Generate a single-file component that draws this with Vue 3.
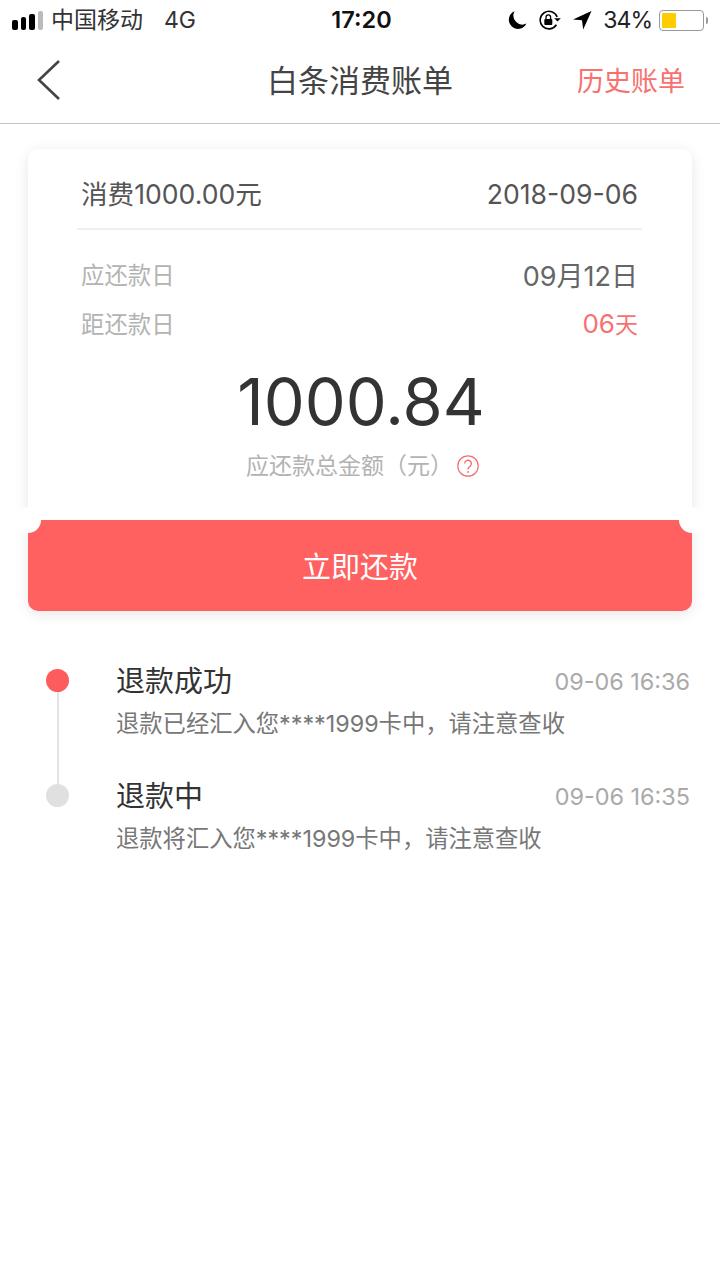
<template>
  <div class="page">
    <div class="status-bar">
      <div class="status-left">
        <div class="signal">
          <i class="s1"></i><i class="s2"></i><i class="s3"></i><i class="s4"></i>
        </div>
        <span class="carrier">中国移动</span>
        <span class="network">4G</span>
      </div>
      <div class="status-time">17:20</div>
      <div class="status-right">
        <svg class="ic-moon" width="20" height="20" viewBox="0 0 20 20">
          <path d="M7.6 1.2A9.2 9.2 0 1 0 19.4 13.6 9 9 0 0 1 7.6 1.2z" fill="#000" />
        </svg>
        <svg class="ic-lock" width="24" height="20" viewBox="0 0 24 20">
          <path d="M19.2 7A8.8 8.8 0 1 0 18.4 14.8" fill="none" stroke="#000" stroke-width="1.6" />
          <path d="M16.2 8.2h6.6l-3.3 3.4z" fill="#000" />
          <rect x="6.3" y="9" width="8" height="6" rx="1" fill="#000" />
          <path d="M8 9V7.2a2.3 2.3 0 0 1 4.6 0V9" fill="none" stroke="#000" stroke-width="1.3" />
        </svg>
        <svg class="ic-loc" width="20" height="20" viewBox="0 0 20 20">
          <path d="M19.5 1L1 9.4l9 .9L11.2 19.5z" fill="#000" />
        </svg>
        <span class="battery-text">34%</span>
        <div class="battery">
          <div class="battery-body"><div class="battery-level"></div></div>
          <div class="battery-tip"></div>
        </div>
      </div>
    </div>

    <div class="nav">
      <svg class="back" width="26" height="42" viewBox="0 0 26 42">
        <path d="M23 2L3 21l20 19" fill="none" stroke="#444" stroke-width="2.6" />
      </svg>
      <h1 class="nav-title">白条消费账单</h1>
      <span class="nav-link">历史账单</span>
    </div>

    <div class="card-wrap">
      <div class="card">
        <div class="card-head">
          <span>消费1000.00元</span>
          <span>2018-09-06</span>
        </div>
        <div class="rows">
          <div class="row">
            <span class="row-label">应还款日</span>
            <span class="row-value">09月12日</span>
          </div>
          <div class="row">
            <span class="row-label">距还款日</span>
            <span class="row-value red"><b>06</b>天</span>
          </div>
        </div>
        <div class="amount">1000.84</div>
        <div class="amount-label">
          <span>应还款总金额（元）</span>
          <svg width="22" height="22" viewBox="0 0 22 22" class="help">
            <circle cx="11" cy="11" r="10.2" fill="none" stroke="#f26d6d" stroke-width="1.2" />
            <path d="M7.6 8.6a3.4 3.4 0 1 1 5.4 2.8c-1.2.9-2 1.4-2 3" fill="none" stroke="#f26d6d" stroke-width="1.3" />
            <circle cx="11" cy="17" r="0.9" fill="#f26d6d" />
          </svg>
        </div>
      </div>
      <button type="button" class="pay-btn">立即还款</button>
      <i class="notch left"></i>
      <i class="notch right"></i>
    </div>

    <div class="timeline">
      <div v-for="(item, index) in steps" :key="index" class="step">
        <div class="step-mark">
          <i class="dot" :class="{ active: item.active }"></i>
          <i v-if="index < steps.length - 1" class="line"></i>
        </div>
        <div class="step-body">
          <div class="step-top">
            <span class="step-title">{{ item.title }}</span>
            <span class="step-time">{{ item.time }}</span>
          </div>
          <div class="step-desc">{{ item.desc }}</div>
        </div>
      </div>
    </div>
  </div>
</template>

<script setup>
const steps = [
  {
    title: "退款成功",
    time: "09-06 16:36",
    desc: "退款已经汇入您****1999卡中，请注意查收",
    active: true,
  },
  {
    title: "退款中",
    time: "09-06 16:35",
    desc: "退款将汇入您****1999卡中，请注意查收",
    active: false,
  },
];
</script>

<style>
html,
body {
  background: #fff;
}
</style>

<style scoped>
.page {
  width: 720px;
  height: 1280px;
  overflow: hidden;
  background: #fff;
  font-family: Inter, "Noto Sans CJK SC", sans-serif;
  color: #333;
}

.status-bar {
  height: 40px;
  display: flex;
  align-items: center;
  justify-content: space-between;
  padding: 0 12px 0 12px;
  color: #000;
  position: relative;
  font-size: 23px;
  line-height: 30px;
}

.status-left,
.status-right {
  display: flex;
  align-items: center;
}

.signal {
  display: flex;
  align-items: flex-end;
  gap: 3px;
  margin-right: 8px;
}

.signal i {
  display: block;
  width: 5.5px;
  background: #000;
  border-radius: 2px;
}

.s1 { height: 10px; }
.s2 { height: 13px; }
.s3 { height: 16px; }
.s4 { height: 19px; background: #bbb !important; }

.carrier {
  color: #333;
}

.network {
  margin-left: 21px;
  color: #333;
}

.status-time {
  position: absolute;
  left: 3px;
  right: 0;
  text-align: center;
  font-size: 23.5px;
  font-weight: 600;
  color: #111;
  pointer-events: none;
}

.ic-moon {
  margin-right: 11px;
}

.ic-lock {
  margin-right: 10px;
}

.ic-loc {
  margin-right: 11px;
}

.battery-text {
  color: #222;
  margin-right: 7px;
  letter-spacing: -1px;
}

.battery {
  display: flex;
  align-items: center;
}

.battery-body {
  width: 45px;
  height: 21px;
  border: 1.5px solid #999;
  border-radius: 4px;
  padding: 2px;
  box-sizing: border-box;
}

.battery-level {
  width: 14px;
  height: 100%;
  background: #fc0;
  border-radius: 1px;
}

.battery-tip {
  width: 2px;
  height: 7px;
  margin-left: 2px;
  background: #999;
  border-radius: 0 2px 2px 0;
}

.nav {
  height: 83px;
  border-bottom: 1px solid #c4c4c4;
  position: relative;
  display: flex;
  align-items: center;
  justify-content: center;
}

.back {
  position: absolute;
  left: 36px;
  top: 19px;
}

.nav-title {
  margin: 0 0 1px;
  font-size: 31px;
  line-height: 40px;
  font-weight: 400;
  color: #444;
}

.nav-link {
  position: absolute;
  right: 35px;
  top: 24px;
  font-size: 27px;
  line-height: 36px;
  color: #f87070;
}

.card-wrap {
  margin: 25px 28px 0;
  position: relative;
  border-radius: 10px;
  box-shadow: 0 3px 14px rgba(0, 0, 0, 0.1);
}

.card {
  height: 371px;
  background: #fff;
  border-radius: 10px 10px 0 0;
  padding: 0 54px 0 53px;
  box-sizing: border-box;
  display: flex;
  flex-direction: column;
}

.card-head {
  height: 81px;
  margin: 0 -4px;
  padding: 11px 4px 0 4px;
  box-sizing: border-box;
  border-bottom: 2px solid #f0f0f0;
  display: flex;
  align-items: center;
  justify-content: space-between;
  font-size: 26.6px;
  line-height: 34px;
  color: #555;
}

.rows {
  margin-top: 32px;
  display: flex;
  flex-direction: column;
  gap: 25px;
}

.row {
  height: 24px;
  display: flex;
  align-items: center;
  justify-content: space-between;
}

.row-label {
  font-size: 23.4px;
  color: #b3b3b3;
}

.row-value {
  font-size: 27px;
  color: #666;
}

.row-value.red {
  color: #f87070;
  font-size: 23px;
}

.row-value.red b {
  font-size: 26px;
  font-weight: 400;
}

.amount {
  margin-top: 29px;
  padding-left: 3px;
  text-align: center;
  font-size: 65px;
  line-height: 76px;
  color: #333;
}

.amount-label {
  margin-top: 11px;
  padding-left: 6px;
  display: flex;
  align-items: center;
  justify-content: center;
  gap: 4px;
  font-size: 23px;
  line-height: 30px;
  color: #b3b3b3;
}

.pay-btn {
  display: block;
  width: 100%;
  height: 91px;
  border: none;
  padding: 0 0 1px;
  background: #ff6060;
  color: #fff;
  font-family: inherit;
  font-size: 29px;
  border-radius: 0 0 10px 10px;
}

.notch {
  position: absolute;
  top: 358px;
  width: 26px;
  height: 26px;
  border-radius: 50%;
  background: #fff;
}

.notch.left {
  left: -13px;
}

.notch.right {
  right: -13px;
}

.timeline {
  margin-top: 50px;
  padding: 0 30px 0 46px;
}

.step {
  display: flex;
  height: 115px;
}

.step-mark {
  width: 24px;
  margin-right: 46px;
  position: relative;
  flex-shrink: 0;
}

.dot {
  position: absolute;
  top: 8px;
  left: 0;
  width: 23px;
  height: 23px;
  border-radius: 50%;
  background: #e0e0e0;
}

.dot.active {
  background: #fd5c5f;
}

.line {
  position: absolute;
  left: 10.5px;
  top: 31px;
  width: 2px;
  height: 92px;
  background: #e4e4e4;
}

.step-body {
  flex: 1;
  min-width: 0;
}

.step-top {
  display: flex;
  justify-content: space-between;
  align-items: center;
  height: 41px;
}

.step-title {
  font-size: 29px;
  line-height: 40px;
  color: #333;
}

.step-time {
  font-size: 23.4px;
  line-height: 30px;
  color: #aaa;
}

.step-desc {
  margin-top: 7px;
  font-size: 23.3px;
  line-height: 30px;
  color: #777;
}
</style>
